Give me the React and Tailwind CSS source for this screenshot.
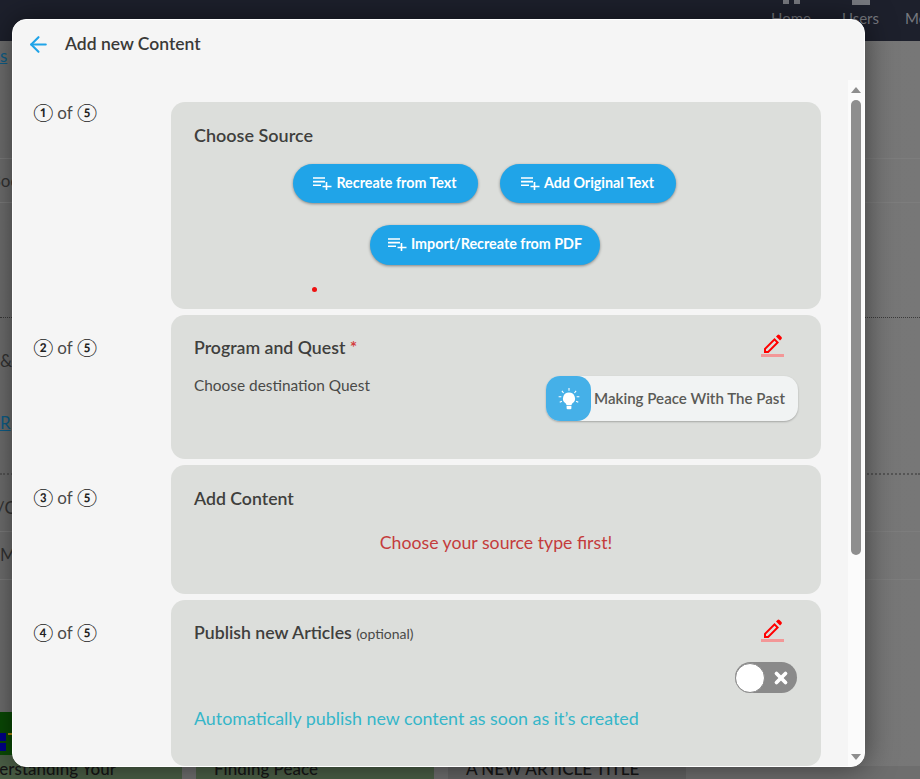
import { ArrowLeft, X } from 'lucide-react'

const font = { fontFamily: 'Lato, "Noto Sans CJK SC", sans-serif' }

function ListPlus() {
  return (
    <svg width="19" height="14" viewBox="0 0 19 14" fill="none" stroke="white" strokeWidth="1.6" className="shrink-0">
      <path d="M0 2h12M0 5.6h12M0 9.2h8M13.5 6v8M9.5 10.5h9" />
    </svg>
  )
}

function SourceButton({ children, className }) {
  return (
    <button className={`rounded-full bg-[#20a4e8] text-white text-[14.3px] font-bold flex items-center justify-center gap-[4px] pb-[2px] shadow-[0_1px_3px_rgba(0,0,0,0.4)] ${className}`}>
      <ListPlus />
      {children}
    </button>
  )
}

function EditIcon() {
  return (
    <div className="flex flex-col items-center w-[23px] pt-[1px]">
      <svg width="20" height="20" viewBox="0 0 20 20" fill="#ff0000">
        <path d="M1 19v-4.500L11.500 4 16 8.500 5.500 19zM3 15.300V17h1.700l8.500-8.500-1.700-1.700zM13 2.500l1.500-1.500a1.500 1.500 0 0 1 2 0l2 2a1.500 1.500 0 0 1 0 2L17 6.500z" />
      </svg>
      <div className="w-[23px] h-[3px] bg-[#f39797]" />
    </div>
  )
}

function Step({ n, height, label = 'pt-[22px]', children }) {
  return (
    <div className="flex">
      <div className={`w-[158px] pl-[20px] text-[17px] text-[#4a4a48] leading-[20px] shrink-0 ${label}`}>
        <span className="text-[18px] text-[#222]">{n}</span> of <span className="text-[18px] text-[#222]">⑤</span>
      </div>
      <div className={`w-[650px] rounded-[14px] bg-[#dcdedb] px-[23px] shrink-0 ${height}`}>{children}</div>
    </div>
  )
}

export default function App() {
  return (
    <div className="relative h-[779px] w-[920px] overflow-hidden bg-[#6e6e6e]" style={font}>
      {/* dimmed page behind the dialog */}
      <div className="h-[41px] bg-[#1d202c] flex justify-end text-[15px] text-[#77797f]">
        <div className="flex flex-col items-center w-[40px]">
          <div className="flex gap-[5px]"><div className="w-[6px] h-[4px] bg-[#77797f]" /><div className="w-[6px] h-[4px] bg-[#77797f]" /></div>
          <span className="mt-[3px]">Home</span>
        </div>
        <div className="flex flex-col items-center w-[37px] ml-[31px]">
          <div className="w-[18px] h-[5px] bg-[#77797f]" />
          <span className="mt-[2px]">Users</span>
        </div>
        <span className="w-[15px] ml-[26px] mt-[7px] overflow-hidden">Me</span>
      </div>
      <div className="h-[725px] bg-gradient-to-r from-[#6f6f6f] to-[#777777] text-[#333] text-[17px]">
        <div className="h-[117px] pt-[2px] text-[#0d5f8a] underline">s</div>
        <div className="h-[45px] border-y border-[#7d7d7d] flex items-center overflow-hidden whitespace-nowrap -ml-[10px]">Book</div>
        <div className="h-[114px]" />
        <div className="h-[156px] border-t border-dotted border-[#3a3a3a] pt-[30px]">
          <span>&amp;</span>
          <div className="mt-[36px] text-[#0d5f8a] underline">R</div>
        </div>
        <div className="h-[239px] border-t-2 border-dotted border-[#555] pt-[20px] whitespace-nowrap">
          <div className="-ml-[3px]">/C</div>
          <div className="mt-[10px] border-t border-[#7d7d7d] pt-[10px]">Ma</div>
          <div className="mt-[12px] border-t border-[#7d7d7d]" />
        </div>
      </div>
      <div className="absolute left-0 top-[712px] flex gap-[14px] h-[67px]">
        <div className="w-[182px] bg-[#4b5f46] relative overflow-hidden">
          <div className="h-[43px] bg-[#0a4a05]" />
          <div className="absolute left-0 top-[21px] w-[6px] h-[8px] bg-[#00008b]" />
          <div className="absolute left-0 top-[31px] w-[6px] h-[8px] bg-[#00008b]" />
          <div className="absolute left-[8px] top-[21px] w-[4px] h-[2px] bg-[#b08a10]" />
          <div className="absolute left-[-32px] top-[44px] text-[17px] font-medium text-[#161616] whitespace-nowrap">Understanding Your</div>
        </div>
        <div className="w-[238px] bg-[#4b5f46] overflow-hidden pl-[18px] pt-[44px] text-[17px] font-medium text-[#161616]">Finding Peace</div>
        <div className="w-[238px] bg-[#636363] overflow-hidden pl-[18px] pt-[44px] text-[17px] font-medium text-[#161616]">A NEW ARTICLE TITLE</div>
      </div>

      {/* dialog */}
      <div className="absolute left-[12px] top-[19px] w-[853px] h-[748px] rounded-[14px] bg-[#f5f5f5] border border-white shadow-[0_0_30px_rgba(0,0,0,0.5)] overflow-hidden flex flex-col">
        <div className="h-[60px] flex items-start pl-[13px] pt-[11px] shrink-0">
          <ArrowLeft size={25} strokeWidth={2} className="text-[#20a4e8] mt-[1px]" />
          <span className="ml-[14px] text-[17.5px] font-semibold text-[#3a3a38]">Add new Content</span>
        </div>
        <div className="flex flex-1 min-h-0">
          <div className="flex-1 overflow-hidden pt-[22px] flex flex-col gap-[6px]">
            <Step n="①" height="h-[207px]" label="pt-0">
              <div className="pt-[22px] text-[18px] font-semibold text-[#3f3f3d] leading-[22px]">Choose Source</div>
              <div className="flex justify-center gap-[22px] mt-[18px] mr-[24px]">
                <SourceButton className="w-[185px] h-[39px]">Recreate from Text</SourceButton>
                <SourceButton className="w-[176px] h-[39px]">Add Original Text</SourceButton>
              </div>
              <div className="flex justify-center mt-[22px] mr-[22px]">
                <SourceButton className="w-[230px] h-[40px]">Import/Recreate from PDF</SourceButton>
              </div>
              <div className="ml-[118px] mt-[22px] w-[5px] h-[5px] rounded-full bg-[#ee1111]" />
            </Step>
            <Step n="②" height="h-[144px]">
              <div className="flex justify-between pt-[18px] pr-[14px] h-[52px]">
                <div className="pt-[4px] text-[17.7px] font-semibold text-[#3f3f3d] leading-[22px]">
                  Program and Quest <span className="text-[#d43f3f]">*</span>
                </div>
                <EditIcon />
              </div>
              <div className="flex justify-between items-start">
                <span className="text-[15.4px] text-[#4a4a48] mt-[8px] leading-[20px]">Choose destination Quest</span>
                <div className="mt-[9px] w-[252px] h-[45px] rounded-[14px] bg-[#f1f3f3] shadow-[0_1px_2px_rgba(0,0,0,0.25)] flex items-center">
                  <div className="w-[45px] h-[45px] rounded-[14px] bg-[#45b0e8] flex items-center justify-center shrink-0">
                    <svg width="24" height="24" viewBox="0 0 22 22" fill="white" stroke="white">
                      <path stroke="none" d="M11 5a5.500 5.500 0 0 0-3.200 10c.6.500.8 1 .8 1.500h4.800c0-.5.2-1 .8-1.500A5.500 5.500 0 0 0 11 5zM8.800 17.300h4.400v2.200a1 1 0 0 1-1 1h-2.400a1 1 0 0 1-1-1z" />
                      <path strokeWidth="1" d="M11 1v2.500M4.500 3.500l1.500 2M17.500 3.500l-1.500 2M1.500 9h2.500M18 9h2.500M2.500 14l2-1M19.500 14l-2-1" />
                    </svg>
                  </div>
                  <span className="ml-[3px] text-[15.1px] font-semibold text-[#5a5a56] whitespace-nowrap">Making Peace With The Past</span>
                </div>
              </div>
            </Step>
            <Step n="③" height="h-[129px]">
              <div className="pt-[23px] text-[17.7px] font-semibold text-[#3f3f3d] leading-[22px]">Add Content</div>
              <div className="mt-[22px] text-center text-[17.7px] text-[#c43c3c] leading-[22px]">Choose your source type first!</div>
            </Step>
            <Step n="④" height="h-[166px]">
              <div className="flex justify-between pt-[18px] pr-[14px] h-[52px]">
                <div className="pt-[4px] text-[17.7px] font-semibold text-[#3f3f3d] leading-[22px]">
                  Publish new Articles <span className="text-[14px] font-normal text-[#4a4a48]">(optional)</span>
                </div>
                <EditIcon />
              </div>
              <div className="flex justify-end mt-[10px] pr-[1px]">
                <div className="w-[62px] h-[31px] rounded-full bg-[#8a8a8a] flex items-center justify-between pr-[7px]">
                  <div className="w-[30px] h-[30px] rounded-full bg-white border border-[#8a8a8a]" />
                  <X size={18} strokeWidth={5} className="text-white" />
                </div>
              </div>
              <div className="mt-[14px] text-[17.85px] text-[#35b6c9] leading-[22px]">Automatically publish new content as soon as it’s created</div>
            </Step>
          </div>
          {/* scrollbar */}
          <div className="w-[16px] shrink-0 bg-[#fbfbfb] flex flex-col items-center pt-[7px] pb-[6px]">
            <div className="w-0 h-0 border-l-[5.5px] border-r-[5.5px] border-b-[6px] border-l-transparent border-r-transparent border-b-[#8e8e8e]" />
            <div className="w-[10px] h-[455px] rounded-full bg-[#8e8e8e] mt-[7px]" />
            <div className="flex-1" />
            <div className="w-0 h-0 border-l-[5.5px] border-r-[5.5px] border-t-[6px] border-l-transparent border-r-transparent border-t-[#8e8e8e]" />
          </div>
        </div>
      </div>
    </div>
  )
}
